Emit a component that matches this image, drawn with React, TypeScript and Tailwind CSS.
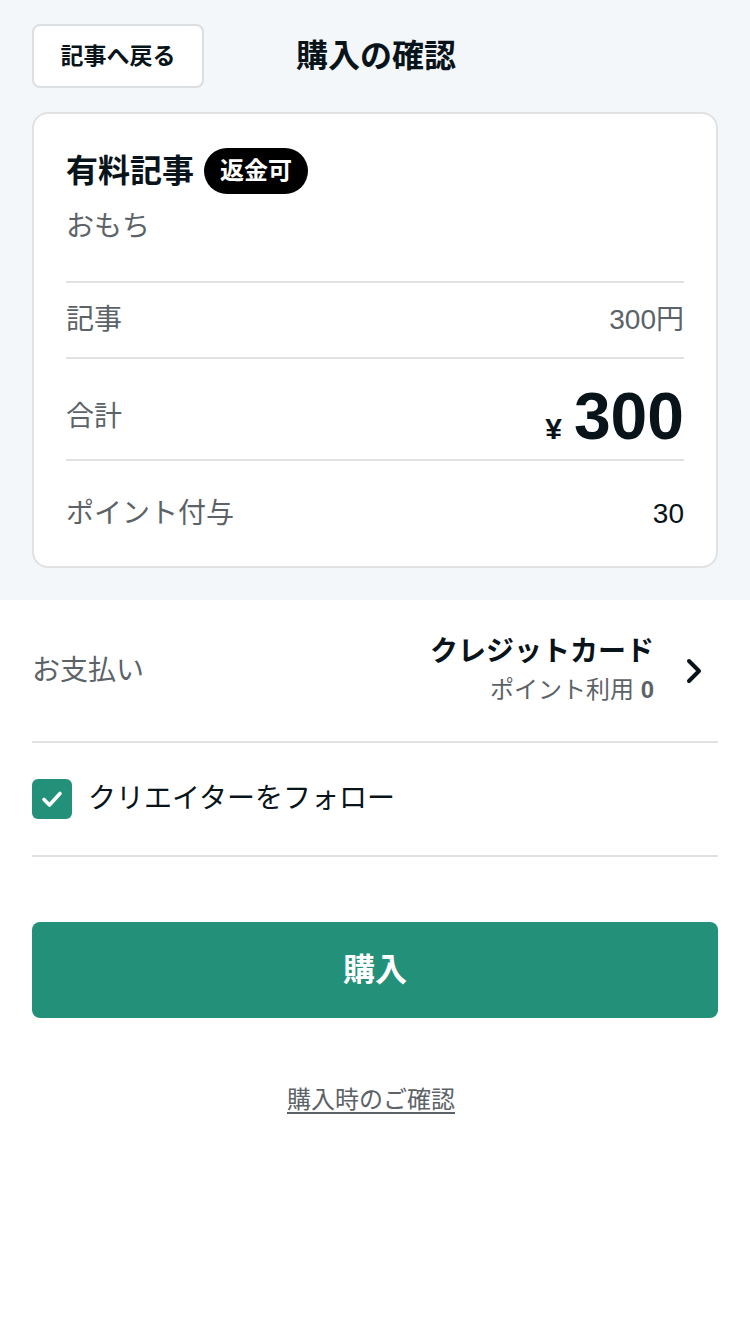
const font = { fontFamily: '"Liberation Sans", "Noto Sans CJK JP", sans-serif' }

function Chevron() {
  return (
    <svg width="20" height="26" viewBox="0 0 20 26" fill="none" aria-hidden="true">
      <polyline points="5,3 15,13 5,23" stroke="#08131a" strokeWidth="4" strokeLinecap="round" strokeLinejoin="round" />
    </svg>
  )
}

function CheckBox() {
  return (
    <div className="flex h-10 w-10 shrink-0 items-center justify-center rounded-md bg-[#23907a]">
      <svg width="26" height="26" viewBox="0 0 26 26" fill="none" aria-hidden="true">
        <polyline points="5,13.5 10.5,19 21,7.5" stroke="#ffffff" strokeWidth="3.6" strokeLinecap="round" strokeLinejoin="round" />
      </svg>
    </div>
  )
}

export default function App() {
  return (
    <div className="min-h-[1334px] w-full bg-white text-[#08131a]" style={font}>
      {/* Summary area */}
      <div className="bg-[#f4f7f9] px-8 pb-8 pt-6">
        <div className="flex h-16 items-center">
          <button className="flex h-16 w-[172px] items-center justify-center rounded-lg border-2 border-[#dcdfe2] bg-white text-[23px] font-bold">
            記事へ戻る
          </button>
          <h1 className="ml-[92px] text-[32px] font-bold">購入の確認</h1>
        </div>

        <div className="mt-6 rounded-2xl border-2 border-[#dfe1e3] bg-white px-8 pt-[34px]">
          <div className="flex h-[46px] items-center">
            <span className="text-[32px] font-bold leading-none">有料記事</span>
            <span className="ml-[10px] flex h-[46px] items-center rounded-full bg-black px-4 text-[24px] font-bold text-white">
              返金可
            </span>
          </div>
          <p className="mt-[13px] text-[28px] leading-[40px] text-[#5c6368]">おもち</p>

          <div className="mt-[34px] flex h-[76px] items-center justify-between border-t-2 border-[#dfe1e3] text-[28px] text-[#5c6368]">
            <span>記事</span>
            <span>300円</span>
          </div>
          <div className="flex h-[102px] items-center justify-between border-t-2 border-[#dfe1e3] pt-4">
            <span className="text-[28px] text-[#5c6368]">合計</span>
            <span className="flex items-baseline font-bold">
              <span className="text-[30px]">¥</span>
              <span className="ml-3 text-[66px] leading-none">300</span>
            </span>
          </div>
          <div className="flex h-[107px] items-center justify-between border-t-2 border-[#dfe1e3] text-[28px]">
            <span className="text-[#5c6368]">ポイント付与</span>
            <span>30</span>
          </div>
        </div>
      </div>

      {/* Options */}
      <div className="px-8">
        <div className="flex h-[143px] items-center justify-between border-b-2 border-[#dfe1e3]">
          <span className="text-[28px] text-[#5c6368]">お支払い</span>
          <div className="flex items-center">
            <div className="text-right">
              <p className="text-[28px] font-bold leading-[38px]">クレジットカード</p>
              <p className="text-[24px] leading-[38px] text-[#5c6368]">
                ポイント利用 <span className="font-bold">0</span>
              </p>
            </div>
            <div className="ml-[30px] mr-[14px]">
              <Chevron />
            </div>
          </div>
        </div>

        <label className="flex h-[114px] items-center border-b-2 border-[#dfe1e3]">
          <CheckBox />
          <span className="ml-4 text-[28px]">クリエイターをフォロー</span>
        </label>

        <button className="mt-[65px] flex h-24 w-full items-center justify-center rounded-lg bg-[#23907a] text-[32px] font-bold text-white">
          購入
        </button>

        <div className="mt-[66px] pr-2 text-center">
          <a className="text-[24px] leading-8 text-[#5c6368] underline underline-offset-4">購入時のご確認</a>
        </div>
      </div>
    </div>
  )
}
